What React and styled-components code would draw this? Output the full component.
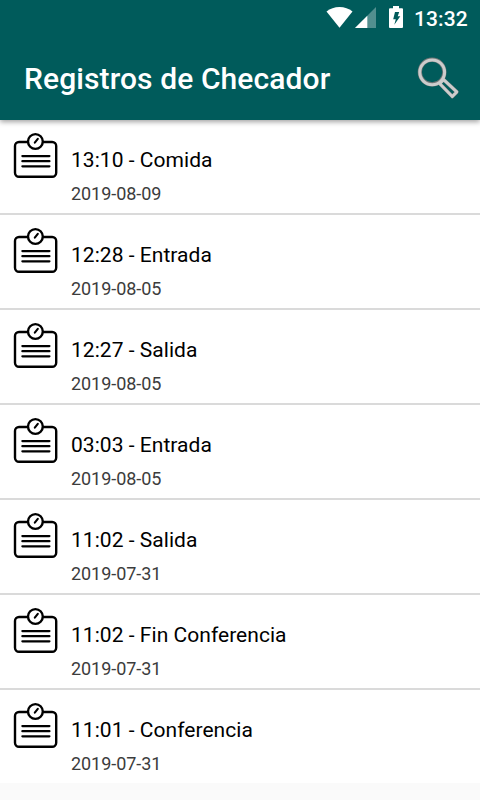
import React from "react";
import styled, { createGlobalStyle } from "styled-components";

const GlobalStyle = createGlobalStyle`
  body {
    margin: 0;
    background: #fafafa;
    font-family: Roboto, sans-serif;
  }
`;

const Screen = styled.div`
  width: 480px;
  height: 800px;
  overflow: hidden;
  background: #fafafa;
`;

const Header = styled.header`
  position: relative;
  height: 120px;
  background: #005b5b;
  color: #ffffff;
  box-shadow: 0 2px 5px rgba(0, 0, 0, 0.36);
`;

const StatusBar = styled.div`
  display: flex;
  align-items: flex-start;
  height: 36px;
  padding: 0 12px 0 326px;
  box-sizing: border-box;
`;

const StatusIcons = styled.svg`
  display: block;
  width: 80px;
  height: 36px;
  flex: none;
`;

const Clock = styled.span`
  margin-left: 8px;
  font-size: 21px;
  font-weight: 500;
  line-height: 39px;
  letter-spacing: 0.1px;
  white-space: nowrap;
`;

const Toolbar = styled.div`
  display: flex;
  justify-content: space-between;
  align-items: center;
  height: 84px;
  padding: 0 18px 0 24px;
`;

const Title = styled.h1`
  margin: 2px 0 0;
  font-size: 30px;
  font-weight: 500;
  line-height: 36px;
  letter-spacing: 0.1px;
`;

const SearchButton = styled.button`
  width: 48px;
  height: 48px;
  padding: 0;
  border: 0;
  background: none;
  & svg {
    display: block;
  }
`;

const List = styled.ul`
  margin: 0;
  padding: 0;
  list-style: none;
`;

const Item = styled.li`
  display: flex;
  height: 93px;
  padding-left: 12px;
  background: #ffffff;
  & + & {
    border-top: 2px solid #dadada;
  }
`;

const ItemIcon = styled.svg`
  width: 48px;
  height: 48px;
  margin-top: 12px;
  flex: none;
`;

const ItemText = styled.div`
  padding: 28px 0 0 11px;
  & .name {
    font-size: 21px;
    line-height: 25px;
    letter-spacing: 0.04px;
    color: #000000;
  }
  & .date {
    margin-top: 10px;
    font-size: 18px;
    line-height: 21px;
    letter-spacing: -0.06px;
    color: #3c3c3c;
  }
`;

const records = [
  { time: "13:10", type: "Comida", date: "2019-08-09" },
  { time: "12:28", type: "Entrada", date: "2019-08-05" },
  { time: "12:27", type: "Salida", date: "2019-08-05" },
  { time: "03:03", type: "Entrada", date: "2019-08-05" },
  { time: "11:02", type: "Salida", date: "2019-07-31" },
  { time: "11:02", type: "Fin Conferencia", date: "2019-07-31" },
  { time: "11:01", type: "Conferencia", date: "2019-07-31" },
];

const DeviceStatus = () => (
  <StatusIcons viewBox="0 0 80 36" fill="#ffffff">
    <path d="M13.5 27.7 L0.5 11.5 Q6 7 13.5 7 Q21 7 26.5 11.5 Z" />
    <path d="M50 7 V28 H29 Z" opacity="0.32" />
    <path d="M41.3 15.7 V28 H29 Z" />
    <path
      fillRule="evenodd"
      d="M67 6 H73 V8.2 H76 Q77 8.2 77 9.2 V27 Q77 28 76 28 H64 Q63 28 63 27 V9.2 Q63 8.2 64 8.2 H67 Z M69 12 H73.2 L71.7 16.2 H74.3 L68.3 24.7 L69.8 19.2 H67.2 Z"
    />
  </StatusIcons>
);

const SearchIcon = () => (
  <svg width="48" height="48" viewBox="0 0 48 48" fill="none">
    <g stroke="#6f7777" strokeWidth="4.2" strokeLinejoin="round">
      <circle cx="18.1" cy="18" r="12.3" />
      <path d="M29.6 25.6 L42.8 37.9 L38.3 42.6 L25.6 29.6 Z" strokeWidth="3.6" />
    </g>
    <g stroke="#cccccc" strokeWidth="3" strokeLinejoin="round">
      <circle cx="18.2" cy="18.3" r="12.4" />
      <path d="M29.6 25.6 L42.8 37.9 L38.3 42.6 L25.6 29.6 Z" strokeWidth="2.9" />
    </g>
  </svg>
);

const RecordIcon = () => (
  <ItemIcon viewBox="0 0 48 48" fill="none" stroke="#000000">
    <rect x="3" y="10" width="41.2" height="34.8" rx="4" strokeWidth="2.4" />
    <circle cx="23.4" cy="9.5" r="7.4" fill="#ffffff" strokeWidth="2.4" />
    <path d="M22.8 10.6 L25.8 6.8" strokeWidth="2.1" strokeLinecap="round" />
    <path
      d="M10.4 24.1 H37.4 M10.4 29.2 H37.4 M10.4 34.3 H37.4"
      strokeWidth="2.3"
      strokeLinecap="round"
    />
  </ItemIcon>
);

const RecordItem = ({ data }) => (
  <Item>
    <RecordIcon />
    <ItemText>
      <div className="name">
        {data.time} - {data.type}
      </div>
      <div className="date">{data.date}</div>
    </ItemText>
  </Item>
);

export default function App() {
  return (
    <Screen>
      <GlobalStyle />
      <Header>
        <StatusBar>
          <DeviceStatus />
          <Clock>13:32</Clock>
        </StatusBar>
        <Toolbar>
          <Title>Registros de Checador</Title>
          <SearchButton aria-label="Buscar">
            <SearchIcon />
          </SearchButton>
        </Toolbar>
      </Header>
      <List>
        {records.map((record) => (
          <RecordItem key={`${record.date} ${record.time} ${record.type}`} data={record} />
        ))}
      </List>
    </Screen>
  );
}
